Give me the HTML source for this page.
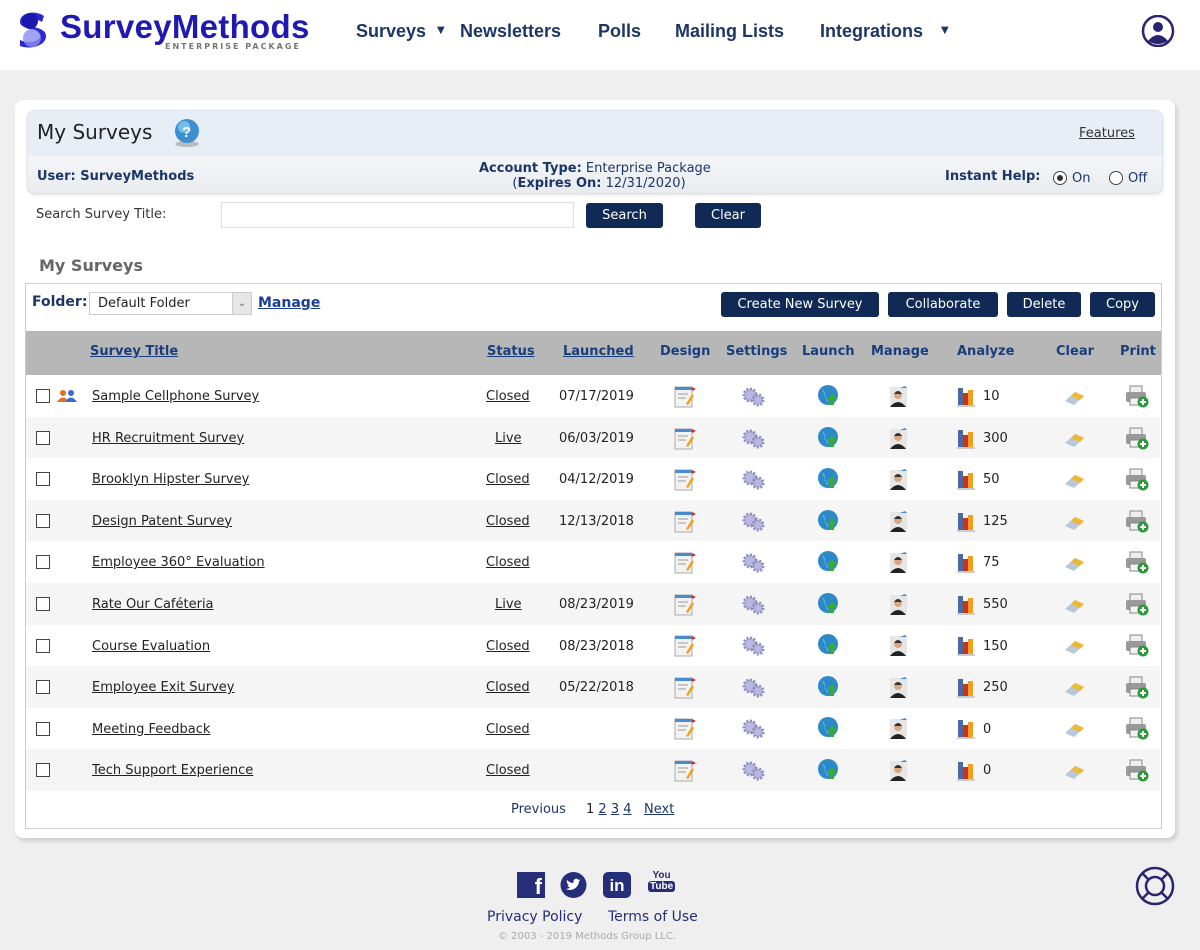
<!DOCTYPE html>
<html><head><meta charset="utf-8"><style>
*{margin:0;padding:0;box-sizing:border-box}
body{width:1200px;height:950px;background:#efefef;font-family:"DejaVu Sans","Liberation Sans",sans-serif;position:relative;overflow:hidden;color:#222}
.a{position:absolute;white-space:nowrap}
.hdr{position:absolute;left:0;top:0;width:1200px;height:70px;background:#fff}
.nav{font-family:"Liberation Sans",sans-serif;font-weight:bold;font-size:18px;color:#1c3668;top:21px}
.card{position:absolute;left:15px;top:100px;width:1160px;height:738px;background:#fff;border-radius:8px;box-shadow:2px 3px 5px rgba(0,0,0,.15)}
.btn{position:absolute;background:#102a55;color:#fff;font-size:13px;border-radius:3px;text-align:center;line-height:25px;height:25px}
.row{position:absolute;left:26px;width:1134px;height:41.6px}
.row span{position:absolute;top:14px;font-size:13px}
.t{left:66px;text-decoration:underline;color:#222}
.s{left:460px;text-decoration:underline}
.d{left:533px}
.n{left:957px}
.cb{left:10px!important;top:14px!important;width:14px;height:14px;border:1.3px solid #444;background:#fff}
.th{position:absolute;top:344px;font-size:13px;font-weight:bold;color:#1a3d7c}
</style></head><body>
<div class="hdr"></div>
<svg class="a" style="left:16px;top:12px" width="32" height="36" viewBox="0 0 32 36"><path d="M28 4 C20 -2 4 0 4 10 C4 18 24 16 24 24 C24 30 12 32 4 28 L4 34 C14 38 30 34 30 24 C30 14 10 16 10 10 C10 6 20 6 26 10Z" fill="#2a2ad0"/><circle cx="16" cy="26" r="9" fill="#8c8cf0" opacity=".8"/><circle cx="14" cy="9" r="8" fill="#1a1ab0"/></svg>
<div class="a" style="left:60px;top:8px;font-family:'Liberation Sans';font-weight:bold;font-size:33px;color:#1f1ab4;letter-spacing:0.3px">SurveyMethods</div>
<div class="a" style="left:165px;top:42px;font-size:8px;font-weight:bold;color:#777;letter-spacing:2px">ENTERPRISE PACKAGE</div>
<div class="a nav" style="left:356px">Surveys</div><div class="a" style="left:437px;top:25px;font-size:10px;color:#1c3668">▼</div>
<div class="a nav" style="left:460px">Newsletters</div>
<div class="a nav" style="left:598px">Polls</div>
<div class="a nav" style="left:675px">Mailing Lists</div>
<div class="a nav" style="left:820px">Integrations</div><div class="a" style="left:941px;top:25px;font-size:10px;color:#1c3668">▼</div>
<svg class="a" style="left:1140px;top:15px" width="36" height="32" viewBox="0 0 36 32"><circle cx="18" cy="16" r="15" fill="none" stroke="#2a2470" stroke-width="2.5"/><circle cx="18" cy="12" r="5" fill="#2a2470"/><path d="M8 26 Q18 14 28 26 Q18 32 8 26Z" fill="#2a2470"/></svg>

<div class="card"></div>
<div class="a" style="left:27px;top:110px;width:1136px;height:84px;border-radius:8px;background:#e8eef6;border:1px solid #dde3ea;box-shadow:0 1px 3px rgba(0,0,0,.12)"></div>
<div class="a" style="left:28px;top:156px;width:1134px;height:37px;border-radius:0 0 8px 8px;background:linear-gradient(#f4f6f8,#e9ecef)"></div>
<div class="a" style="left:37px;top:120px;font-size:20px;color:#222">My Surveys</div>
<svg class="a" style="left:171px;top:118px" width="32" height="30"><ellipse cx="16" cy="26" rx="12" ry="3" fill="#bbb"/><circle cx="16" cy="13" r="12" fill="#3d8fd0"/><circle cx="13" cy="9" r="6" fill="#8fd0f5" opacity=".7"/><text x="11" y="19" font-size="15" font-weight="bold" fill="#fff" font-family="Liberation Sans">?</text></svg>
<div class="a" style="left:1079px;top:126px;font-size:13px;text-decoration:underline;color:#333">Features</div>
<div class="a" style="left:37px;top:169px;font-size:13px;font-weight:bold;color:#1c3668">User: SurveyMethods</div>
<div class="a" style="left:479px;top:161px;font-size:13px;color:#1c3668;text-align:center;line-height:15px"><b>Account Type:</b> Enterprise Package<br>&nbsp;&nbsp;(<b>Expires On:</b> 12/31/2020)</div>
<div class="a" style="left:945px;top:169px;font-size:13px;font-weight:bold;color:#1c3668">Instant Help:</div>
<div class="a" style="left:1053px;top:171px;width:14px;height:14px;border:1.3px solid #444;border-radius:50%;background:#fff"><div style="margin:2.5px;width:6.5px;height:6.5px;border-radius:50%;background:#333"></div></div>
<div class="a" style="left:1072px;top:171px;font-size:13px;color:#1c3668">On</div>
<div class="a" style="left:1109px;top:171px;width:14px;height:14px;border:1.3px solid #444;border-radius:50%;background:#fff"></div>
<div class="a" style="left:1128px;top:171px;font-size:13px;color:#1c3668">Off</div>

<div class="a" style="left:36px;top:207px;font-size:13px;color:#333">Search Survey Title:</div>
<div class="a" style="left:221px;top:202px;width:353px;height:26px;border:1px solid #ddd;background:#fff"></div>
<div class="btn" style="left:586px;top:203px;width:77px">Search</div>
<div class="btn" style="left:695px;top:203px;width:66px">Clear</div>
<div class="a" style="left:39px;top:256px;font-size:16px;font-weight:bold;color:#666">My Surveys</div>

<div class="a" style="left:25px;top:283px;width:1137px;height:546px;border:1px solid #ccc;background:#fff"></div>
<div class="a" style="left:32px;top:294px;font-size:14px;font-weight:bold;color:#1c3668">Folder:</div>
<div class="a" style="left:89px;top:292px;width:163px;height:23px;border:1px solid #ccc;background:#fff;font-size:13px;padding:3px 8px;color:#222">Default Folder</div>
<div class="a" style="left:232px;top:293px;width:19px;height:21px;background:#e6e6e6;border-left:1px solid #ccc;font-size:10px;text-align:center;line-height:21px;color:#666">⌄</div>
<div class="a" style="left:258px;top:295px;font-size:14px;font-weight:bold;color:#1a3d9c;text-decoration:underline">Manage</div>
<div class="btn" style="left:721px;top:292px;width:158px">Create New Survey</div>
<div class="btn" style="left:888px;top:292px;width:110px">Collaborate</div>
<div class="btn" style="left:1007px;top:292px;width:74px">Delete</div>
<div class="btn" style="left:1090px;top:292px;width:65px">Copy</div>

<div class="a" style="left:26px;top:331px;width:1135px;height:44px;background:#b7b7b7"></div>
<div class="th" style="left:90px;text-decoration:underline">Survey Title</div>
<div class="th" style="left:487px;text-decoration:underline">Status</div>
<div class="th" style="left:563px;text-decoration:underline">Launched</div>
<div class="th" style="left:660px">Design</div>
<div class="th" style="left:726px">Settings</div>
<div class="th" style="left:802px">Launch</div>
<div class="th" style="left:871px">Manage</div>
<div class="th" style="left:957px">Analyze</div>
<div class="th" style="left:1056px">Clear</div>
<div class="th" style="left:1120px">Print</div>

<svg width="0" height="0" style="position:absolute"><defs>
<g id="design"><rect x="3" y="3" width="17" height="20" fill="#f2f2f2" stroke="#aaa"/><rect x="3" y="3" width="17" height="3" fill="#4a8ad0"/><line x1="6" y1="10" x2="16" y2="10" stroke="#999"/><line x1="6" y1="14" x2="14" y2="14" stroke="#999"/><path d="M14 20 L20 10 L22 12 L16 21Z" fill="#f0a020"/><path d="M20 3 L24 5 L20 7Z" fill="#c03030"/></g>
<g id="gear" fill="#b8b8e0" stroke="#9090c0"><circle cx="9" cy="11" r="6" stroke-dasharray="2 1.5" stroke-width="3"/><circle cx="17" cy="16" r="5" stroke-dasharray="2 1.5" stroke-width="3"/></g>
<g id="globe"><circle cx="11" cy="11" r="10" fill="#2d8ac8"/><path d="M5 5 Q10 9 7 14 Q12 13 11 19" fill="#5dbde8"/><path d="M15 9 L20 15 H17 V21 H13 V15 H10Z" fill="#3aaa3a"/></g>
<g id="man"><rect x="4" y="3" width="17" height="20" fill="#e6e6e6"/><circle cx="12" cy="11" r="4" fill="#d8a880"/><path d="M8 10 Q12 4 16 10" fill="#333"/><path d="M4 23 Q12 13 20 23Z" fill="#222"/><path d="M14 4 H21 L19 2Z" fill="#4a8ad0"/></g>
<g id="bar"><rect x="3" y="4" width="5" height="17" fill="#4a6aa0"/><rect x="8" y="9" width="5" height="12" fill="#d03020"/><rect x="13" y="6" width="5" height="15" fill="#f0a020"/><rect x="2" y="21" width="18" height="2" fill="#ccc"/></g>
<g id="eraser"><path d="M3 17 L13 8 L22 12 L12 21Z" fill="#b8c8d8"/><path d="M9 12 L13 8 L22 12 L18 16Z" fill="#f0b830"/></g>
<g id="print"><rect x="6" y="2" width="12" height="7" fill="#eee" stroke="#888"/><rect x="2" y="8" width="20" height="10" rx="2" fill="#999"/><rect x="6" y="14" width="12" height="7" fill="#f3f3f3" stroke="#888"/><circle cx="19" cy="18" r="5.5" fill="#2a9a3a"/><path d="M16 18 H22 M19 15 V21" stroke="#fff" stroke-width="2"/></g>
</defs></svg>

<div class="row" style="top:375px;background:#fff"><span class="cb"></span><svg class="a" style="left:30px;top:14px" width="22" height="14"><circle cx="7" cy="4" r="3" fill="#e07020"/><path d="M1 13 Q7 4 13 13Z" fill="#e07020"/><circle cx="15" cy="4" r="3" fill="#3a6ad0"/><path d="M9 13 Q15 4 21 13Z" fill="#3a6ad0"/></svg><span class="t">Sample Cellphone Survey</span><span class="s">Closed</span><span class="d">07/17/2019</span><span class="n">10</span></div>
<div class="row" style="top:416.6px;background:#f5f5f5"><span class="cb"></span><span class="t">HR Recruitment Survey</span><span class="s" style="left:469px">Live</span><span class="d">06/03/2019</span><span class="n">300</span></div>
<div class="row" style="top:458.2px;background:#fff"><span class="cb"></span><span class="t">Brooklyn Hipster Survey</span><span class="s">Closed</span><span class="d">04/12/2019</span><span class="n">50</span></div>
<div class="row" style="top:499.8px;background:#f5f5f5"><span class="cb"></span><span class="t">Design Patent Survey</span><span class="s">Closed</span><span class="d">12/13/2018</span><span class="n">125</span></div>
<div class="row" style="top:541.4px;background:#fff"><span class="cb"></span><span class="t">Employee 360° Evaluation</span><span class="s">Closed</span><span class="n">75</span></div>
<div class="row" style="top:583px;background:#f5f5f5"><span class="cb"></span><span class="t">Rate Our Caféteria</span><span class="s" style="left:469px">Live</span><span class="d">08/23/2019</span><span class="n">550</span></div>
<div class="row" style="top:624.6px;background:#fff"><span class="cb"></span><span class="t">Course Evaluation</span><span class="s">Closed</span><span class="d">08/23/2018</span><span class="n">150</span></div>
<div class="row" style="top:666.2px;background:#f5f5f5"><span class="cb"></span><span class="t">Employee Exit Survey</span><span class="s">Closed</span><span class="d">05/22/2018</span><span class="n">250</span></div>
<div class="row" style="top:707.8px;background:#fff"><span class="cb"></span><span class="t">Meeting Feedback</span><span class="s">Closed</span><span class="n">0</span></div>
<div class="row" style="top:749.4px;background:#f5f5f5"><span class="cb"></span><span class="t">Tech Support Experience</span><span class="s">Closed</span><span class="n">0</span></div>

<svg class="a" style="left:0;top:0" width="1200" height="950">
<defs><g id="icons"><use href="#design" x="672"/><use href="#gear" x="741"/><use href="#globe" x="817"/><use href="#man" x="886"/><use href="#bar" x="955"/><use href="#eraser" x="1062"/><use href="#print" x="1124"/></g></defs>
<use href="#icons" y="384"/><use href="#icons" y="426"/><use href="#icons" y="467"/><use href="#icons" y="509"/><use href="#icons" y="550"/><use href="#icons" y="592"/><use href="#icons" y="633"/><use href="#icons" y="675"/><use href="#icons" y="716"/><use href="#icons" y="758"/>
</svg>

<div class="a" style="left:511px;top:802px;font-size:13px;color:#1c3668">Previous</div>
<div class="a" style="left:586px;top:802px;font-size:13px;color:#222">1 <u style="color:#1c3668">2</u> <u style="color:#1c3668">3</u> <u style="color:#1c3668">4</u></div>
<div class="a" style="left:644px;top:802px;font-size:13px;color:#1c3668;text-decoration:underline">Next</div>

<div class="a" style="left:517px;top:872px;width:28px;height:26px;background:#262e7a;color:#fff;font:bold 22px 'Liberation Sans';text-align:right;padding-right:3px;line-height:30px">f</div>
<svg class="a" style="left:560px;top:872px" width="27" height="26" viewBox="0 0 27 26"><circle cx="13.5" cy="13" r="13" fill="#262e7a"/><path d="M6 17 Q10 19 14 17 Q19 14 19 9 L21 7.5 L19 8 Q17 6 15 7 Q13 8 13.5 11 Q10 11 7 8 Q6 11 9 13 L7.5 13 Q8 15 10 15.5 Q8 17 6 17Z" fill="#fff"/></svg>
<div class="a" style="left:603px;top:872px;width:28px;height:26px;border-radius:5px;background:#262e7a;color:#fff;font:bold 17px 'Liberation Sans';text-align:center;line-height:27px">in</div>
<div class="a" style="left:648px;top:870px;font:bold 10px 'Liberation Sans';color:#262e7a;text-align:center;line-height:11px">You<br><span style="background:#262e7a;color:#fff;border-radius:3px;padding:0 2px">Tube</span></div>
<div class="a" style="left:487px;top:909px;font-size:14px;color:#262e7a">Privacy Policy</div>
<div class="a" style="left:608px;top:909px;font-size:14px;color:#262e7a">Terms of Use</div>
<div class="a" style="left:498px;top:931px;font-size:10px;color:#aaa">© 2003 - 2019 Methods Group LLC.</div>
<svg class="a" style="left:1130px;top:864px" width="50" height="44" viewBox="0 0 50 44"><circle cx="25" cy="22" r="18" fill="none" stroke="#2a2470" stroke-width="2.5"/><circle cx="25" cy="22" r="9" fill="none" stroke="#2a2470" stroke-width="2.5"/><path d="M12 9 L19 16 M38 9 L31 16 M12 35 L19 28 M38 35 L31 28" stroke="#2a2470" stroke-width="2.5"/></svg>
</body></html>
